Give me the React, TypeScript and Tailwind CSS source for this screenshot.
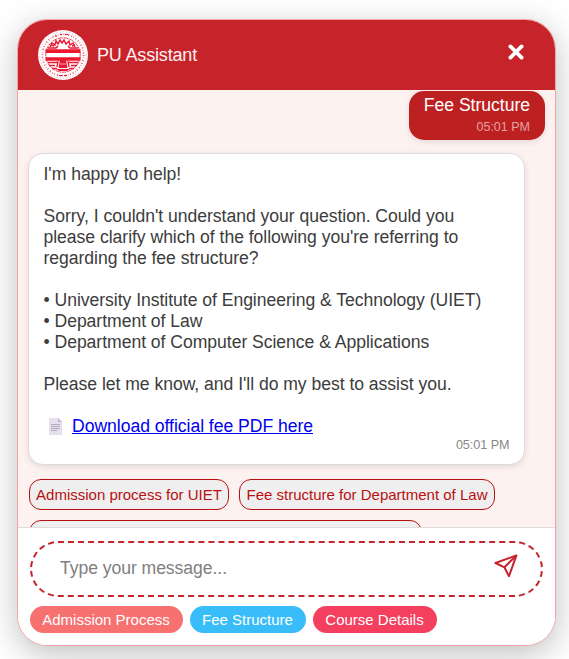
function Seal() {
  return (
    <svg className="size-[50px] shrink-0" viewBox="0 0 50 50" fill="none">
      <circle cx="25" cy="25" r="25" fill="#fff" />
      <g stroke="#ee1530">
        <circle cx="25" cy="25" r="23.3" strokeWidth=".5" strokeDasharray="1.2 2" opacity=".6" />
        <circle cx="25" cy="25" r="20.7" strokeWidth="1.7" strokeDasharray="1 1.5 .6 1.8 1.2 2" opacity=".7" />
        <circle cx="25" cy="25" r="17.2" strokeWidth=".8" strokeDasharray="5 .8" />
        <path d="m12 17 2-4 3 2 1-4 2 3 2-4 2 3 2-3 2 4 3-3 1 4 3-2 2 4" strokeWidth="1.4" />
        <path d="M10 18h8l2-2M40 18h-8l-2-2M13 15l3 1M34 16l3-1" strokeWidth="1.5" />
        <path d="M10 32.5h9M40 32.5h-9M11 35.5h6M33 35.5h6M14 38.5h5M31 38.5h5M20 31l-1 6M30 31l1 6" strokeWidth="1.4" />
        <path d="M21 45.5h3M26 45.5h3M17 6h2M22 4.5h2M27 4.5h3" strokeWidth="1.1" />
      </g>
      <path d="M7.5 19.3h35v3.7h-35zM7.5 27.3h35v3.4h-35zM22 30h6l1.5 8h-9zM18 39h14l-3 2h-8z" fill="#ee1530" />
      <path d="M22 34h6" stroke="#fff" strokeWidth=".6" />
    </svg>
  );
}

function CloseIcon() {
  return (
    <svg className="-mt-[6px] mr-[4px] size-4" viewBox="0 0 16 16" fill="none" stroke="#fff" strokeWidth="3.8" strokeLinecap="round">
      <path d="m2.4 2.4 11.2 11.2M13.6 2.4 2.4 13.6" />
    </svg>
  );
}

function PageIcon() {
  return (
    <svg className="ml-[5px] h-[17px] w-[13px]" viewBox="0 0 13 17">
      <path d="M0 0h9l4 4v13H0z" fill="#e6dff0" />
      <path d="M9 0v4h4z" fill="#c3b8cb" />
      <path d="M2 6.5h9M2 8.5h9M2 10.5h9M2 12.5h6" stroke="#b4a8bd" strokeWidth="1" />
    </svg>
  );
}

function SendIcon() {
  return (
    <svg className="size-6" viewBox="0 0 24 24" fill="none" stroke="#c6232b" strokeWidth="2" strokeLinejoin="round">
      <path d="M22.4 1.4 1.4 9l9 4.3 4.6 8.9z" />
      <path d="m22.4 1.4-12 11.9" />
    </svg>
  );
}

const message = `I'm happy to help!

Sorry, I couldn't understand your question. Could you
please clarify which of the following you're referring to
regarding the fee structure?

• University Institute of Engineering & Technology (UIET)
• Department of Law
• Department of Computer Science & Applications

Please let me know, and I'll do my best to assist you.`;

const suggestion =
  'h-[31px] shrink-0 whitespace-nowrap rounded-[12px] border border-[#b80f12] bg-[#efefef] text-[15px] text-[#b80f12]';
const chip = 'h-[27px] rounded-full pr-px text-center text-[15px] leading-[27px] text-white';

export default function App() {
  return (
    <div className="h-[659px] w-[569px] overflow-hidden bg-white pl-[17px] pt-[19px] font-['Liberation_Sans',Arial,sans-serif]">
      <div className="flex h-[627px] w-[539px] flex-col overflow-hidden rounded-[30px] border border-[#f5a3a5] bg-white shadow-[0_8px_32px_rgba(0,0,0,0.25)]">
        <header className="flex h-[70px] shrink-0 items-center bg-[#c6232b] pl-5 pr-[27px]">
          <Seal />
          <span className="ml-[9px] flex-1 text-[18px] tracking-[-0.17px] text-[#fff1f1]">PU Assistant</span>
          <CloseIcon />
        </header>
        <main className="flex h-[437px] shrink-0 flex-col overflow-hidden bg-[#fdf2f0] px-[10px] pt-px">
          <div className="h-[49px] w-[136px] shrink-0 self-end rounded-[15px] bg-[#bd2021] pr-[15px] pt-[4px] text-right shadow-[0_2px_6px_rgba(0,0,0,0.1)]">
            <p className="text-[17.6px] leading-[21px] tracking-[-0.03px] text-white">Fee Structure</p>
            <p className="mt-[3px] text-[12.5px] leading-4 text-[#e5a1a1]">05:01 PM</p>
          </div>
          <div className="mt-[13px] h-[312px] w-[497px] shrink-0 rounded-[15px] border border-[#dcdcdc] bg-white px-[14.5px] pt-[10px] text-[17.6px] leading-[21px] tracking-[-0.04px] text-[#3c3c3c] shadow-[0_2px_6px_rgba(0,0,0,0.1)]">
            <p className="whitespace-pre">{message}</p>
            <div className="mt-[21px] flex h-[21px] items-center">
              <PageIcon />
              <a className="ml-[10.5px] text-[#0000ee] underline">Download official fee PDF here</a>
            </div>
            <p className="-mt-px text-right text-[12.6px] leading-[18px] text-[#888]">05:01 PM</p>
          </div>
          <div className="mt-[14px] flex shrink-0 flex-wrap gap-[10px] pl-px">
            <button className={`${suggestion} w-[200px] pt-px`}>Admission process for UIET</button>
            <button className={`${suggestion} w-[256px] pt-px`}>Fee structure for Department of Law</button>
            <button className={`${suggestion} w-[393px]`}> </button>
          </div>
        </main>
        <footer className="flex-1 border-t border-[#ddd] bg-white px-3 pt-[13px]">
          <div className="flex h-[56px] w-[513px] items-center justify-between rounded-[30px] border-2 border-dashed border-[#c6232b] pl-[28px] pr-[23px]">
            <span className="-mt-[2px] text-[17.6px] tracking-[-0.06px] text-[#808080]">Type your message...</span>
            <span className="-mt-[6px]"><SendIcon /></span>
          </div>
          <div className="mt-[9px] flex gap-[7px]">
            <span className={`${chip} w-[153px] bg-[#f87171]`}>Admission Process</span>
            <span className={`${chip} w-[116px] bg-[#38bdf8]`}>Fee Structure</span>
            <span className={`${chip} w-[124px] bg-[#f43f5e]`}>Course Details</span>
          </div>
        </footer>
      </div>
    </div>
  );
}
